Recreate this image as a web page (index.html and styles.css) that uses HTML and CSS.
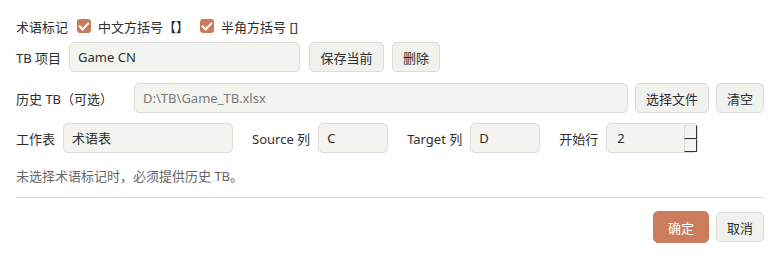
FILE: index.html
```html
<!DOCTYPE html>
<html lang="zh-CN">
<head>
    <meta charset="UTF-8">
    <title>术语表设置</title>
    <link rel="stylesheet" href="styles.css">
</head>
<body>
    <div class="dialog">
        <!-- 术语标记 -->
        <div class="row row-marks">
            <span class="label">术语标记</span>
            <label class="check"><span class="box"></span>中文方括号【】</label>
            <label class="check"><span class="box"></span>半角方括号 []</label>
        </div>

        <div class="row">
            <span class="label">TB 项目</span>
            <div class="field w-project">Game CN</div>
            <button class="btn w-save">保存当前</button>
            <button class="btn w-del">删除</button>
        </div>

        <div class="row row-tight">
            <span class="label">历史 TB（可选）</span>
            <div class="field grow muted">D:\TB\Game_TB.xlsx</div>
            <button class="btn w-pick">选择文件</button>
            <button class="btn w-clear">清空</button>
        </div>

        <div class="row row-sheet">
            <span class="label">工作表</span>
            <div class="field w-sheet">术语表</div>
            <span class="label spaced">Source 列</span>
            <div class="field w-col">C</div>
            <span class="label spaced">Target 列</span>
            <div class="field w-col">D</div>
            <span class="label spaced">开始行</span>
            <div class="field spin">
                <span>2</span>
                <span class="arrows"><i></i><i></i></span>
            </div>
        </div>

        <p class="hint">未选择术语标记时，必须提供历史 TB。</p>
        <hr class="sep">

        <div class="footer">
            <button class="btn primary">确定</button>
            <button class="btn w-clear">取消</button>
        </div>
    </div>
</body>
</html>
```

FILE: styles.css
```css
/* Global Styles */
body {
    margin: 0;
    background: #ffffff;
    color: #2e2e2e;
    font-family: "Noto Sans", "Noto Sans CJK SC", sans-serif;
    font-size: 13px;
}

.dialog {
    padding: 16px 16px 0 16px;
}

.row {
    display: flex;
    align-items: center;
    gap: 8px;
    margin-bottom: 11px;
}

.row-marks {
    height: 20px;
    margin-bottom: 6px;
    gap: 0;
}

.row-tight {
    gap: 7px;
    margin-bottom: 10px;
}

.row-tight .label {
    margin-right: 14px;
}

.label {
    white-space: nowrap;
}

.label.spaced {
    margin-left: 11px;
}

.check {
    display: flex;
    align-items: center;
    margin-left: 9px;
}

.check + .check {
    margin-left: 11px;
}

.box {
    position: relative;
    width: 14px;
    height: 14px;
    border-radius: 3px;
    background: #cc7a5c;
    margin-right: 7px;
}

.box::after {
    content: "";
    position: absolute;
    left: 4px;
    top: 1px;
    width: 4px;
    height: 8px;
    border: solid #fff;
    border-width: 0 2px 2px 0;
    transform: rotate(45deg);
}

.field {
    box-sizing: border-box;
    height: 30px;
    line-height: 28px;
    padding: 0 8px;
    background: #f3f3f0;
    border: 1px solid #dcdcd8;
    border-radius: 5px;
}

.grow {
    flex: 1;
}

.muted {
    color: #7a7a7a;
}

.w-project { width: 231px; }
.w-sheet { width: 170px; }
.w-col { width: 70px; }

.spin {
    position: relative;
    width: 92px;
    padding-left: 10px;
}

.arrows {
    position: absolute;
    right: 0;
    top: 1px;
    bottom: 0;
    width: 13px;
    display: flex;
    flex-direction: column;
}

.arrows i {
    flex: 1;
    border-left: 1px solid #dcdcd8;
    border-top: 1px solid #e6e6e2;
    border-right: 1px solid #333;
    border-bottom: 1px solid #333;
}

.btn {
    box-sizing: border-box;
    height: 30px;
    padding: 0;
    font: inherit;
    color: #2e2e2e;
    background: #f1f1ee;
    border: 1px solid #dcdcd8;
    border-radius: 5px;
}

.w-save { width: 75px; margin-left: 1px; }
.w-del { width: 48px; }
.w-pick { width: 74px; }
.w-clear { width: 48px; }

.hint {
    margin: 14px 0 0 0;
    color: #666;
    line-height: 18px;
}

.sep {
    border: none;
    border-top: 1px solid #dddddd;
    margin: 12px 0 13px 0;
}

.footer {
    display: flex;
    justify-content: flex-end;
    align-items: center;
    gap: 7px;
}

.btn.primary {
    width: 56px;
    height: 32px;
    background: #cc7b5d;
    border-color: #cc7b5d;
    color: #ffffff;
}
```
